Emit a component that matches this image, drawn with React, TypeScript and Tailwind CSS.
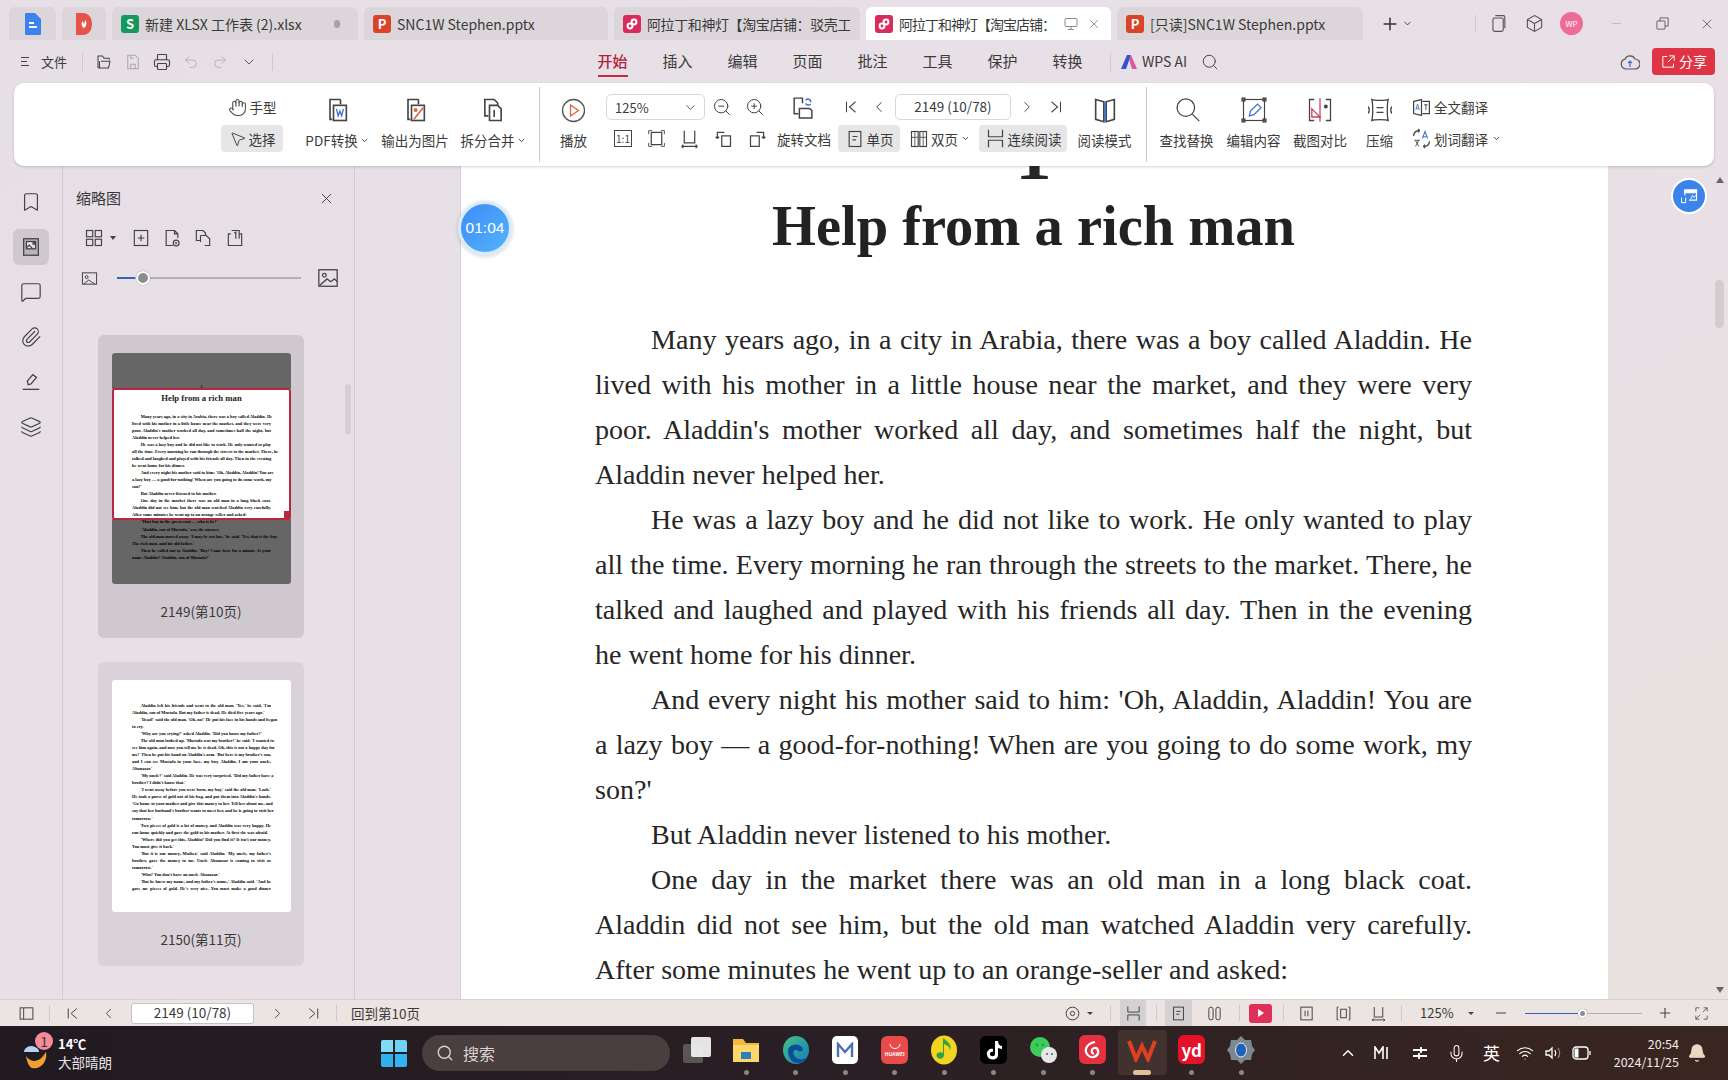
import { ReactNode } from "react";
import {
  Bell,
  Bookmark,
  ChevronDown,
  ChevronLeft,
  ChevronRight,
  ChevronUp,
  Hand,
  Layers,
  MessageSquare,
  Mic,
  MousePointer2,
  Paperclip,
  Plus,
  Minus,
  Printer,
  Redo2,
  Search,
  Undo2,
  Wifi,
  X,
  ZoomIn,
  ZoomOut,
} from "lucide-react";

const cjk = "font-['Noto_Sans_CJK_SC','Noto_Sans',sans-serif]";
const serif = "font-['Liberation_Serif','Times_New_Roman',serif]";

type Line = { t: string; first?: boolean; last?: boolean };

const pageOne: Line[] = [
  { t: "Many years ago, in a city in Arabia, there was a boy called Aladdin. He", first: true },
  { t: "lived with his mother in a little house near the market, and they were very" },
  { t: "poor. Aladdin's mother worked all day, and sometimes half the night, but" },
  { t: "Aladdin never helped her.", last: true },
  { t: "He was a lazy boy and he did not like to work. He only wanted to play", first: true },
  { t: "all the time. Every morning he ran through the streets to the market. There, he" },
  { t: "talked and laughed and played with his friends all day. Then in the evening" },
  { t: "he went home for his dinner.", last: true },
  { t: "And every night his mother said to him: 'Oh, Aladdin, Aladdin! You are", first: true },
  { t: "a lazy boy — a good-for-nothing! When are you going to do some work, my" },
  { t: "son?'", last: true },
  { t: "But Aladdin never listened to his mother.", first: true, last: true },
  { t: "One day in the market there was an old man in a long black coat.", first: true },
  { t: "Aladdin did not see him, but the old man watched Aladdin very carefully." },
  { t: "After some minutes he went up to an orange-seller and asked:", last: true },
];

const pageOneRest: Line[] = [
  { t: "'That boy in the green coat — who is he?'", first: true, last: true },
  { t: "'Aladdin, son of Mustafa,' was the answer.", first: true, last: true },
  { t: "The old man moved away. 'I may be too late,' he said. 'Yes, that is the boy.", first: true },
  { t: "The rich man, and his old father.'", last: true },
  { t: "Then he called out to Aladdin: 'Boy! Come here for a minute. Is your", first: true },
  { t: "name Aladdin? Aladdin, son of Mustafa?'", last: true },
];

const pageTwo: Line[] = [
  { t: "Aladdin left his friends and went to the old man. 'Yes,' he said, 'I'm", first: true },
  { t: "Aladdin, son of Mustafa. But my father is dead. He died five years ago.'", last: true },
  { t: "'Dead!' said the old man. 'Oh, no!' He put his face in his hands and began", first: true },
  { t: "to cry.", last: true },
  { t: "'Why are you crying?' asked Aladdin. 'Did you know my father?'", first: true, last: true },
  { t: "The old man looked up. 'Mustafa was my brother!' he said. 'I wanted to", first: true },
  { t: "see him again, and now you tell me he is dead. Oh, this is not a happy day for" },
  { t: "me!' Then he put his hand on Aladdin's arm. 'But here is my brother's son," },
  { t: "and I can see Mustafa in your face, my boy. Aladdin, I am your uncle," },
  { t: "Abanazar.'", last: true },
  { t: "'My uncle?' said Aladdin. He was very surprised. 'Did my father have a", first: true },
  { t: "brother? I didn't know that.'", last: true },
  { t: "'I went away before you were born, my boy,' said the old man. 'Look.'", first: true },
  { t: "He took a purse of gold out of his bag, and put them into Aladdin's hands." },
  { t: "'Go home to your mother and give this money to her. Tell her about me, and" },
  { t: "say that her husband's brother wants to meet her, and he is going to visit her" },
  { t: "tomorrow.'", last: true },
  { t: "Two pieces of gold is a lot of money, and Aladdin was very happy. He", first: true },
  { t: "ran home quickly and gave the gold to his mother. At first she was afraid.", last: true },
  { t: "'Where did you get this, Aladdin? Did you find it? It isn't our money.", first: true },
  { t: "You must give it back.'", last: true },
  { t: "'But it is our money, Mother,' said Aladdin. 'My uncle, my father's", first: true },
  { t: "brother, gave the money to me. Uncle Abanazar is coming to visit us" },
  { t: "tomorrow.'", last: true },
  { t: "'Who? You don't have an uncle Abanazar.'", first: true, last: true },
  { t: "'But he knew my name, and my father's name,' Aladdin said. 'And he", first: true },
  { t: "gave me pieces of gold. He's very nice. You must make a good dinner" },
];

function Svg({ size = 24, children, className = "" }: { size?: number; children: ReactNode; className?: string }) {
  return (
    <svg width={size} height={size} viewBox="0 0 24 24" fill="none" stroke="currentColor" strokeWidth="1.4" className={className}>
      {children}
    </svg>
  );
}

function Sep({ className = "h-[16px]" }: { className?: string }) {
  return <div className={`w-px shrink-0 bg-[#cfc9ce] ${className}`} />;
}

function Tab({ w, icon, label, active, labelClass = "", children }: { w: string; icon: ReactNode; label: string; active?: boolean; labelClass?: string; children?: ReactNode }) {
  return (
    <div className={`${w} flex h-[33px] shrink-0 items-center rounded-t-[6px] pl-[9px] pr-[10px] ${active ? "bg-white" : "bg-[#dcd6db]"}`}>
      {icon}
      <span className={`ml-[6px] min-w-0 flex-1 overflow-hidden whitespace-nowrap text-[14px] leading-[20px] text-[#3a3a3a] ${labelClass}`}>{label}</span>
      {children}
    </div>
  );
}

function FileIcon({ bg, letter }: { bg: string; letter: string }) {
  return (
    <div className={`${bg} flex h-[18px] w-[18px] shrink-0 items-center justify-center rounded-[3px] text-[13px] font-bold leading-none text-white`}>
      {letter}
    </div>
  );
}

function LinkIcon() {
  return (
    <div className="flex h-[18px] w-[18px] shrink-0 items-center justify-center rounded-[3px] bg-[#d92b5c]">
      <svg width="12" height="12" viewBox="0 0 12 12" fill="none" stroke="white" strokeWidth="2">
        <circle cx="8" cy="4" r="2.4" />
        <circle cx="4" cy="8" r="2.4" />
      </svg>
    </div>
  );
}

function MenuItem({ label, active }: { label: string; active?: boolean }) {
  return (
    <div className="relative flex h-full w-[65px] items-center justify-center">
      <span className={`text-[15px] ${active ? "font-medium text-[#b5213a]" : "text-[#3a3a3a]"}`}>{label}</span>
      {active && <div className="absolute bottom-[6px] h-[2px] w-[30px] bg-[#c8283f]" />}
    </div>
  );
}

function BigTool({ w, label, caret, children }: { w: string; label: string; caret?: boolean; children: ReactNode }) {
  return (
    <div className={`${w} flex shrink-0 flex-col items-center`}>
      <div className="flex h-[32px] items-center justify-center text-[#444]">{children}</div>
      <div className="flex h-[28px] items-center whitespace-nowrap text-[13.5px] leading-[18px] text-[#3a3a3a]">
        {label}
        {caret && <ChevronDown size={9} strokeWidth={2.5} className="ml-[2px]" />}
      </div>
    </div>
  );
}

function Box({ w, children }: { w: string; children: ReactNode }) {
  return <div className={`${w} flex h-full shrink-0 items-center justify-center text-[#444]`}>{children}</div>;
}

function Ribbon() {
  return (
    <div className="relative z-10 mx-[14px] flex h-[83px] w-[1700px] items-start rounded-[10px] bg-white pl-[207px] pt-[11px] text-[#3a3a3a] shadow-[0_1px_3px_rgba(0,0,0,0.18)]">
      <div className="flex w-[62px] shrink-0 flex-col items-center">
        <div className="flex h-[26px] items-center text-[13.5px] leading-[18px]">
          <Hand size={19} strokeWidth={1.3} className="mr-[3px] text-[#444]" />
          手型
        </div>
        <div className="mt-[5px] flex h-[27px] w-full items-center justify-center rounded-[4px] bg-[#e7e6e7] text-[13.5px] leading-[18px]">
          <MousePointer2 size={18} strokeWidth={1.3} className="mr-[2px] text-[#444]" />
          选择
        </div>
      </div>
      <div className="ml-[23px] flex">
        <BigTool w="w-[62px]" label="PDF转换" caret>
          <Svg size={28}>
            <path d="M15 3H6v17h2M15 3v4" />
            <rect x="9" y="8" width="11" height="13" />
            <path d="M11.5 11l1.5 6 1.5-4 1.5 4 1.5-6" stroke="#3f6fd1" strokeWidth="1.1" />
          </Svg>
        </BigTool>
        <BigTool w="ml-[13px] w-[68px]" label="输出为图片">
          <Svg size={28}>
            <path d="M15 3H6v17h2M15 3v4" />
            <rect x="9" y="8" width="11" height="13" />
            <path d="M11 20l8-10" stroke="#d8653d" />
            <circle cx="12.5" cy="12" r="1" stroke="#d8653d" />
          </Svg>
        </BigTool>
        <BigTool w="ml-[12px] w-[64px]" label="拆分合并" caret>
          <Svg size={28}>
            <path d="M8 17H5V3h8l3 3v2" />
            <path d="M9 8h7l3 3v10H9z" />
            <path d="M13 12v6" />
          </Svg>
        </BigTool>
      </div>
      <Sep className="ml-[14px] mt-[-7px] h-[75px]" />
      <div className="ml-[20px] flex w-[27px] shrink-0 flex-col items-center">
        <div className="flex h-[32px] items-center">
          <svg width="25" height="25" viewBox="0 0 25 25" fill="none">
            <circle cx="12.5" cy="12.5" r="11" stroke="#555" strokeWidth="1.3" />
            <path d="M9.5 7l8 5.5-8 5.5z" stroke="#d8653d" strokeWidth="1.3" />
          </svg>
        </div>
        <div className="flex h-[28px] items-center whitespace-nowrap text-[13.5px] leading-[18px]">播放</div>
      </div>
      <div className="ml-[19px] flex w-[464px] shrink-0 flex-col">
        <div className="flex h-[26px]">
          <div className="flex w-[99px] shrink-0 items-center justify-between rounded-[5px] border border-[#d8d8d8] pl-[8px] pr-[6px] text-[13px] leading-none">
            125%
            <ChevronDown size={15} strokeWidth={1.3} />
          </div>
          <Box w="w-[34px]"><ZoomOut size={20} strokeWidth={1.2} /></Box>
          <Box w="w-[32px]"><ZoomIn size={20} strokeWidth={1.2} /></Box>
          <Box w="w-[62px]">
            <Svg size={25}>
              <path d="M12 8V3H4v15h4" />
              <path d="M9 13h10l2 2v7H9z" />
              <path d="M15 5c2-2 5-1 5 2M20 9c-2 1-4 1-5-1" stroke="#3f6fd1" />
            </Svg>
          </Box>
          <Box w="w-[36px]">
            <Svg size={18}><path d="M6 5v14M18 5l-8 7 8 7" /></Svg>
          </Box>
          <Box w="w-[20px]"><ChevronLeft size={18} strokeWidth={1.3} /></Box>
          <div className="ml-[6px] flex w-[116px] shrink-0 items-center justify-center rounded-[5px] border border-[#d8d8d8] text-[13.5px] leading-none">2149 (10/78)</div>
          <Box w="w-[32px]"><ChevronRight size={18} strokeWidth={1.3} /></Box>
          <Box w="w-[26px]">
            <Svg size={18}><path d="M18 5v14M6 5l8 7-8 7" /></Svg>
          </Box>
        </div>
        <div className="mt-[5px] flex h-[27px] items-center">
          <Box w="w-[34px]">
            <div className="flex h-[17px] w-[18px] items-center justify-center border border-[#444] text-[10px] leading-none">1:1</div>
          </Box>
          <Box w="w-[33px]">
            <Svg size={21}>
              <path d="M6 5h12v14H6z" />
              <path d="M3 7V3h4M17 3h4v4M21 17v4h-4M7 21H3v-4" strokeWidth="1" />
            </Svg>
          </Box>
          <Box w="w-[33px]">
            <Svg size={21}><path d="M6 3v14h12V3M3 21h18M3 21l2-2M3 21l2 2M21 21l-2-2M21 21l-2 2" /></Svg>
          </Box>
          <Box w="w-[34px]">
            <Svg size={21}><rect x="10" y="9" width="10" height="12" /><path d="M5 12V5h8M5 12l-2-2M5 12l2-2" /></Svg>
          </Box>
          <Box w="w-[34px]">
            <Svg size={21}><rect x="4" y="9" width="10" height="12" /><path d="M19 12V5h-8M19 12l-2-2M19 12l2-2" /></Svg>
          </Box>
          <div className="flex w-[60px] shrink-0 justify-center whitespace-nowrap text-[13.5px] leading-[18px]">旋转文档</div>
          <div className="ml-[4px] flex h-full w-[62px] shrink-0 items-center justify-center rounded-[4px] bg-[#e7e6e7] text-[13.5px] leading-[18px]">
            <Svg size={20} className="mr-[2px] text-[#444]"><rect x="5" y="3" width="14" height="18" /><path d="M9 9h6M9 13h4" /></Svg>
            单页
          </div>
          <div className="flex h-full w-[79px] shrink-0 items-center justify-center text-[13.5px] leading-[18px]">
            <Svg size={20} className="mr-[2px] text-[#444]"><rect x="3" y="3" width="8" height="18" /><rect x="13" y="3" width="8" height="18" /><path d="M7 3v18M17 3v18M3 10h8M13 10h8" strokeWidth="1" /></Svg>
            双页
            <ChevronDown size={9} strokeWidth={2.5} className="ml-[3px]" />
          </div>
          <div className="flex h-full w-[88px] shrink-0 items-center justify-center rounded-[4px] bg-[#e7e6e7] text-[13.5px] leading-[18px]">
            <Svg size={21} className="mr-[2px] text-[#444]"><path d="M4 2v8h16V2M4 22v-8h16v8" /></Svg>
            连续阅读
          </div>
        </div>
      </div>
      <BigTool w="ml-[7px] w-[55px]" label="阅读模式">
        <Svg size={28}>
          <path d="M4 3l7 2v17l-7-2zM20 3l-7 2v17l7-2z" />
          <path d="M12 5v17" stroke="#3f6fd1" />
        </Svg>
      </BigTool>
      <Sep className="ml-[14px] mt-[-7px] h-[75px]" />
      <BigTool w="ml-[13px] w-[53px]" label="查找替换">
        <Svg size={28}><circle cx="11" cy="10" r="7.5" strokeWidth="1.1" /><path d="M16.5 15.5l6 6" strokeWidth="1.1" /></Svg>
      </BigTool>
      <BigTool w="ml-[14px] w-[53px]" label="编辑内容">
        <Svg size={28}>
          <rect x="3" y="3" width="18" height="18" strokeWidth="1" />
          <path d="M8 17l1-4 6-6 3 3-6 6z" stroke="#3f6fd1" strokeWidth="1.1" />
          <path d="M1.5 1.5h3v3h-3zM19.5 1.5h3v3h-3zM1.5 19.5h3v3h-3zM19.5 19.5h3v3h-3z" fill="#555" strokeWidth="0.5" />
        </Svg>
      </BigTool>
      <BigTool w="ml-[13px] w-[54px]" label="截图对比">
        <Svg size={28}>
          <path d="M7 3H3v18h4M17 3h4v18h-4" strokeWidth="1.1" />
          <path d="M12 2v20" stroke="#c8405c" strokeWidth="1.1" />
          <path d="M5 11l7 7H5z" stroke="#c8405c" strokeWidth="1.1" />
          <circle cx="17" cy="9" r="1" fill="#555" />
        </Svg>
      </BigTool>
      <BigTool w="ml-[19px] w-[27px]" label="压缩">
        <Svg size={28}>
          <path d="M5 3c2 1 12 1 14 0-1 4-1 14 0 18-2-1-12-1-14 0 1-4 1-14 0-18z" strokeWidth="1.1" />
          <path d="M9 10h6M9 14h6M2 9c1 2 1 4 0 6M22 9c-1 2-1 4 0 6" strokeWidth="1.1" />
        </Svg>
      </BigTool>
      <div className="ml-[18px] flex shrink-0 flex-col">
        <div className="flex h-[26px] items-center whitespace-nowrap text-[13.5px] leading-[18px]">
          <Svg size={21} className="mr-[2px] text-[#444]">
            <path d="M3 5l9-2v18l-9-2z" />
            <path d="M13 5h8v14h-8" />
            <path d="M5.5 15l2-7 2 7M6.5 13h2" stroke="#3f6fd1" strokeWidth="1" />
            <path d="M15 9h4M17 8v7" strokeWidth="1" />
          </Svg>
          全文翻译
        </div>
        <div className="mt-[5px] flex h-[27px] items-center whitespace-nowrap text-[13.5px] leading-[18px]">
          <Svg size={21} className="mr-[2px] text-[#444]">
            <path d="M3 9c0-4 3-6 7-6M10 3L8 1M10 3L8 5M21 15c0 4-3 6-7 6M14 21l2-2M14 21l2 2" />
            <path d="M13 12l3-8 3 8M14 10h4" stroke="#3f6fd1" strokeWidth="1.2" />
            <path d="M4 14h6M5 21l4-7M9 21l-4-7" strokeWidth="1" />
          </Svg>
          划词翻译
          <ChevronDown size={9} strokeWidth={2.5} className="ml-[4px]" />
        </div>
      </div>
    </div>
  );
}

function Rail() {
  const icons = [
    <Bookmark key="b" size={22} strokeWidth={1.3} />,
    <Svg key="t" size={22}><rect x="4" y="3" width="16" height="18" fill="#b9b4ba" /><rect x="7" y="6" width="10" height="8" fill="#e8e3e8" /><circle cx="15" cy="8" r="1" /><path d="M7 13l3-3 4 4" /></Svg>,
    <MessageSquare key="m" size={22} strokeWidth={1.3} />,
    <Paperclip key="p" size={22} strokeWidth={1.3} />,
    <Svg key="h" size={22}><path d="M9 15l-1-4 6-7 4 3-6 7z" /><path d="M3 20h18" /></Svg>,
    <Layers key="l" size={22} strokeWidth={1.3} />,
  ];
  return (
    <div className="flex w-[63px] shrink-0 flex-col items-center border-r border-[#d2ccd1] pt-[18px] text-[#444]">
      {icons.map((icon, i) => (
        <div key={i} className={`flex h-[36px] w-[36px] items-center justify-center rounded-[6px] ${i ? "mt-[9px]" : ""} ${i === 1 ? "bg-[#cfc9cf]" : ""}`}>
          {icon}
        </div>
      ))}
    </div>
  );
}

function ThumbLines({ lines }: { lines: Line[] }) {
  return (
    <div className={`${serif} text-[4.37px] font-bold leading-[7.03px] text-black`}>
      {lines.map((l, i) => (
        <div key={i} className={`whitespace-nowrap ${l.first ? "pl-[8.7px]" : ""} ${l.last ? "" : "text-justify [text-align-last:justify]"}`}>
          {l.t}
        </div>
      ))}
    </div>
  );
}

function ThumbPanel() {
  return (
    <div className="relative flex w-[292px] shrink-0 flex-col overflow-hidden border-r border-[#d2ccd1] text-[#444]">
      <div className="mt-[18px] flex h-[28px] items-center pl-[13px] pr-[19px]">
        <span className="flex-1 text-[15px] text-[#3a3a3a]">缩略图</span>
        <X size={17} strokeWidth={1.4} />
      </div>
      <div className="mt-[12px] flex h-[28px] items-center pl-[21px]">
        <Svg size={20}><rect x="3" y="3" width="7.5" height="7.5" /><rect x="13.5" y="3" width="7.5" height="7.5" /><rect x="3" y="13.5" width="7.5" height="7.5" /><rect x="13.5" y="13.5" width="7.5" height="7.5" /></Svg>
        <div className="ml-[6px] h-0 w-0 border-x-[3px] border-t-[4px] border-x-transparent border-t-[#444]" />
        <Svg size={20} className="ml-[15px]"><rect x="4" y="3" width="16" height="18" /><path d="M12 8v8M8 12h8" /></Svg>
        <Svg size={20} className="ml-[11px]"><path d="M15 3H5v18h8M15 3l4 4v5M15 3v4h4" /><circle cx="17" cy="18" r="3.5" /><path d="M15.7 16.7l2.6 2.6M18.3 16.7l-2.6 2.6" strokeWidth="1" /></Svg>
        <Svg size={20} className="ml-[11px]"><path d="M9 15H4V3h8l3 3v3" /><path d="M9 9h7l4 4v8h-6" /><path d="M9 9v8" /></Svg>
        <Svg size={20} className="ml-[12px]"><path d="M7 7H4v14h16V7h-3" /><path d="M8 3h9v10" /><path d="M11 6l2-1v8" /></Svg>
      </div>
      <div className="mt-[12px] flex h-[28px] items-center pl-[18px]">
        <Svg size={17}><rect x="2" y="4" width="20" height="16" /><circle cx="8" cy="10" r="2" /><path d="M4 20l7-6 4 3 5 3" /></Svg>
        <div className="relative ml-[19px] h-[2px] w-[184px] bg-[#b5b0b5]">
          <div className="h-full w-[18px] bg-[#3a63b8]" />
          <div className="absolute left-[19px] top-[-6px] h-[14px] w-[14px] rounded-full border-[2px] border-white bg-[#8d8d90] shadow-[0_0_1px_rgba(0,0,0,0.5)]" />
        </div>
        <Svg size={22} className="ml-[16px]"><rect x="2" y="3" width="20" height="18" /><circle cx="8" cy="9" r="2" /><path d="M3 20l8-7 4 3 4-3 3 3" /></Svg>
      </div>
      <div className="absolute left-[282px] top-[218px] h-[50px] w-[6px] rounded-full bg-[#d4cfd4]" />

      <div className="ml-[35px] mt-[43px] flex h-[303px] w-[206px] shrink-0 flex-col rounded-[6px] bg-[#cfc8cf]">
        <div className="relative mx-[14px] mt-[18px] h-[231px] w-[179px] overflow-hidden rounded-[3px] bg-white px-[20px]">
          <div className={`${serif} h-[40px] pt-[31px] text-center text-[5px] font-bold leading-none`}>1</div>
          <div className={`${serif} text-center text-[8.7px] font-bold leading-[11px] text-[#222]`}>Help from a rich man</div>
          <div className="mt-[9px]">
            <ThumbLines lines={[...pageOne, ...pageOneRest]} />
          </div>
          <div className="absolute inset-x-0 top-0 h-[36px] bg-black/60" />
          <div className="absolute inset-x-0 top-[166px] bottom-0 bg-black/60" />
          <div className="absolute inset-x-0 top-[35px] h-[132px] rounded-[3px] border-[2px] border-[#b6283f]" />
          <div className="absolute right-0 top-[158px] h-[7px] w-[7px] bg-[#b6283f]" />
        </div>
        <div className="flex flex-1 items-center justify-center text-[13.5px] text-[#3a3a3a]">2149(第10页)</div>
      </div>

      <div className="ml-[35px] mt-[24px] flex h-[304px] w-[206px] shrink-0 flex-col rounded-[6px] bg-[#d9d3d9]">
        <div className="mx-[14px] mt-[18px] h-[232px] w-[179px] overflow-hidden rounded-[3px] bg-white px-[20px] pt-[22px]">
          <ThumbLines lines={pageTwo} />
        </div>
        <div className="flex flex-1 items-center justify-center text-[13.5px] text-[#3a3a3a]">2150(第11页)</div>
      </div>
    </div>
  );
}

function DocPage() {
  return (
    <div className={`${serif} w-[1148px] shrink-0 overflow-hidden border-l border-[#d5d0d5] bg-white pl-[134px] pr-[136px] text-[#262626]`}>
      <div className="flex h-[14px] items-end justify-center overflow-hidden">
        <span className="text-[72px] font-bold leading-[72px] [margin-bottom:-11px]">1</span>
      </div>
      <h1 className="mt-[15px] h-[64px] whitespace-nowrap text-center text-[56.5px] font-bold leading-[62px] text-[#222]">Help from a rich man</h1>
      <div className="mt-[58px] text-[28.05px] leading-[45px]">
        {pageOne.map((l, i) => (
          <div key={i} className={`whitespace-nowrap ${l.first ? "pl-[56px]" : ""} ${l.last ? "" : "text-justify [text-align-last:justify]"}`}>
            {l.t}
          </div>
        ))}
      </div>
    </div>
  );
}

function BottomBar() {
  return (
    <div className="flex h-[27px] shrink-0 items-center justify-between border-t border-[#d5cfd0] bg-[#ebe4e3] text-[#444]">
      <div className="flex h-full items-center">
        <div className="ml-[3px] flex w-[46px] justify-center">
          <Svg size={17}><rect x="3" y="4" width="18" height="16" /><path d="M8 4v16" /></Svg>
        </div>
        <Sep />
        <div className="flex w-[44px] justify-center"><Svg size={17}><path d="M6 5v14M18 5l-8 7 8 7" /></Svg></div>
        <div className="flex w-[28px] justify-center"><ChevronLeft size={17} strokeWidth={1.3} /></div>
        <div className="ml-[9px] flex h-[21px] w-[123px] items-center justify-center rounded-[3px] border border-[#c5c0c3] bg-white text-[13.5px] leading-none text-[#3a3a3a]">2149 (10/78)</div>
        <div className="flex w-[46px] justify-center"><ChevronRight size={17} strokeWidth={1.3} /></div>
        <div className="flex w-[26px] justify-center"><Svg size={17}><path d="M18 5v14M6 5l8 7-8 7" /></Svg></div>
        <Sep className="ml-[10px] h-[16px]" />
        <span className="ml-[14px] text-[13.5px] text-[#3a3a3a]">回到第10页</span>
      </div>
      <div className="flex h-full items-center pr-[17px]">
        <div className="flex w-[24px] justify-center">
          <Svg size={17}><circle cx="12" cy="12" r="9" /><circle cx="12" cy="12" r="3" /></Svg>
        </div>
        <div className="flex w-[12px] justify-center"><div className="h-0 w-0 border-x-[3px] border-t-[3px] border-x-transparent border-t-[#444]" /></div>
        <Sep className="ml-[14px] h-[16px]" />
        <div className="ml-[9px] flex h-full w-[26px] items-center justify-center bg-[#d5d0d1]">
          <Svg size={17}><path d="M4 2v8h16V2M4 22v-8h16v8" /></Svg>
        </div>
        <Sep className="ml-[10px] h-[16px]" />
        <div className="ml-[8px] flex h-full w-[27px] items-center justify-center bg-[#d5d0d1]">
          <Svg size={17}><rect x="5" y="3" width="14" height="18" /><path d="M9 9h6M9 13h4" /></Svg>
        </div>
        <div className="flex w-[44px] justify-center">
          <Svg size={17}><rect x="4" y="3" width="6" height="18" rx="3" /><rect x="14" y="3" width="6" height="18" rx="3" /></Svg>
        </div>
        <Sep className="ml-[3px] h-[16px]" />
        <div className="ml-[9px] flex h-[19px] w-[23px] items-center justify-center rounded-[3px] bg-[#de3059]">
          <div className="h-0 w-0 border-y-[4px] border-l-[6px] border-y-transparent border-l-white" />
        </div>
        <Sep className="ml-[11px] h-[16px]" />
        <div className="flex w-[44px] justify-center"><Svg size={17}><rect x="4" y="3" width="16" height="18" /><path d="M10 8v8M14 8v8" /></Svg></div>
        <div className="flex w-[30px] justify-center">
          <Svg size={17}><rect x="8" y="6" width="8" height="12" /><path d="M5 3H3v18h2M19 3h2v18h-2" /></Svg>
        </div>
        <div className="flex w-[40px] justify-center">
          <Svg size={17}><path d="M6 3v14h12V3M3 21h18M3 21l2-2M3 21l2 2M21 21l-2-2M21 21l-2 2" /></Svg>
        </div>
        <Sep className="ml-[3px] h-[16px]" />
        <span className="ml-[18px] w-[34px] text-[13px] text-[#3a3a3a]">125%</span>
        <div className="ml-[11px] flex w-[12px] justify-center"><div className="h-0 w-0 border-x-[3px] border-t-[3px] border-x-transparent border-t-[#444]" /></div>
        <div className="ml-[14px] flex w-[20px] justify-center"><Minus size={16} strokeWidth={1.6} /></div>
        <div className="relative ml-[14px] h-px w-[117px] bg-[#b5b0b5]">
          <div className="h-full w-[58px] bg-[#3a63b8]" />
          <div className="absolute left-[53px] top-[-4px] h-[9px] w-[9px] rounded-full border-[2px] border-white bg-[#8d8d90] shadow-[0_0_1px_rgba(0,0,0,0.5)]" />
        </div>
        <div className="ml-[13px] flex w-[20px] justify-center"><Plus size={16} strokeWidth={1.6} /></div>
        <div className="ml-[16px] flex w-[20px] justify-center">
          <Svg size={17}><path d="M4 9V4h5M15 4h5v5M20 15v5h-5M9 20H4v-5M14 10l6-6M10 14l-6 6" strokeWidth="1.1" /></Svg>
        </div>
      </div>
    </div>
  );
}

function AppSlot({ children, dot = true, active }: { children: ReactNode; dot?: boolean; active?: boolean }) {
  return (
    <div className={`relative flex h-[45px] w-[49.5px] shrink-0 items-center justify-center rounded-[4px] pb-[6px] ${active ? "bg-[#42322f]" : ""}`}>
      {children}
      {dot && !active && <div className="absolute bottom-0 h-[5px] w-[5px] rounded-full bg-[#8b8583]" />}
      {active && <div className="absolute bottom-0 h-[5px] w-[18px] rounded-full bg-[#e3bd9d]" />}
    </div>
  );
}

function TaskApps() {
  return (
    <div className="ml-[2px] flex h-full items-end pb-[5px]">
      <AppSlot dot={false}>
        <div className="relative h-[26px] w-[28px]">
          <div className="absolute left-0 top-[7px] h-[19px] w-[20px] rounded-[2px] bg-[#5a5654]" />
          <div className="absolute right-0 top-0 h-[20px] w-[20px] rounded-[2px] bg-[#efefef] opacity-95" />
        </div>
      </AppSlot>
      <AppSlot>
        <svg width="28" height="28" viewBox="0 0 28 28">
          <path d="M1 3h10l3 4h13v19H1z" fill="#f2b93b" />
          <path d="M1 9h26v17H1z" fill="#fbd869" />
          <rect x="9" y="16" width="10" height="7" fill="#2f7fc0" />
        </svg>
      </AppSlot>
      <AppSlot>
        <svg width="28" height="30" viewBox="0 0 28 30">
          <defs>
            <linearGradient id="edgeA" x1="0" y1="0" x2="1" y2="1">
              <stop offset="0" stopColor="#42c67d" />
              <stop offset="1" stopColor="#1878c8" />
            </linearGradient>
          </defs>
          <ellipse cx="14" cy="15" rx="13" ry="14" fill="url(#edgeA)" />
          <path d="M6 15c1-6 12-8 15-1 0 3-5 3-6 1-6-1-4 8 2 9 3 1 6 0 8-2-3 6-12 8-16 3-2-3-3-6-3-10z" fill="#0c4f96" />
        </svg>
      </AppSlot>
      <AppSlot>
        <div className="flex h-[28px] w-[26px] items-center justify-center rounded-[5px] bg-white">
          <svg width="18" height="16" viewBox="0 0 18 16" fill="none" stroke="#4d6fb5" strokeWidth="2.4">
            <path d="M2 15V2l7 8 7-8v13" />
          </svg>
        </div>
      </AppSlot>
      <AppSlot>
        <div className="flex h-[28px] w-[27px] flex-col items-center justify-center rounded-[6px] bg-[#e94b4b]">
          <svg width="14" height="6" viewBox="0 0 14 6" fill="none" stroke="white" strokeWidth="1"><path d="M2 0c0 6 10 6 10 0" /></svg>
          <span className="mt-[1px] text-[5px] font-bold leading-none text-white">HUAWEI</span>
        </div>
      </AppSlot>
      <AppSlot>
        <svg width="28" height="30" viewBox="0 0 28 30">
          <ellipse cx="14" cy="15" rx="13" ry="14.5" fill="#f3d41f" />
          <path d="M13 3v15c-4-2-8 1-6 4s7 2 7-2V9c3 1 6 3 6 6 2-4-1-8-7-12z" fill="#2fa04e" />
        </svg>
      </AppSlot>
      <AppSlot>
        <div className="flex h-[28px] w-[27px] items-center justify-center rounded-[6px] bg-black">
          <svg width="18" height="20" viewBox="0 0 18 20">
            <path d="M10 1h3c0 3 2 5 4 5v3c-2 0-3-1-4-1v7c0 6-10 6-11 0-1-4 3-7 6-6v3c-2-1-3 1-3 2 0 3 5 3 5 0z" fill="white" />
          </svg>
        </div>
      </AppSlot>
      <AppSlot>
        <svg width="30" height="30" viewBox="0 0 30 30">
          <ellipse cx="12" cy="12" rx="10" ry="10" fill="#3ecb5c" />
          <ellipse cx="21" cy="20" rx="8" ry="8" fill="#e8e8e8" />
          <circle cx="9" cy="10" r="1.4" fill="#1a3" />
          <circle cx="15" cy="10" r="1.4" fill="#1a3" />
          <circle cx="19" cy="19" r="1" fill="#555" />
          <circle cx="24" cy="19" r="1" fill="#555" />
        </svg>
      </AppSlot>
      <AppSlot>
        <div className="flex h-[29px] w-[27px] items-center justify-center rounded-[6px] bg-[#e5313f]">
          <svg width="19" height="20" viewBox="0 0 19 20" fill="none" stroke="white" strokeWidth="2.2">
            <path d="M12 2c-7 1-10 6-9 10s6 7 10 4 2-9-2-8c-3 1-3 5 0 6" />
          </svg>
        </div>
      </AppSlot>
      <AppSlot active>
        <svg width="30" height="24" viewBox="0 0 30 24" fill="none" stroke="#e23f22" strokeWidth="4">
          <path d="M2 3l7 18 6-13 6 13 7-18" />
        </svg>
      </AppSlot>
      <AppSlot>
        <div className="flex h-[29px] w-[27px] items-center justify-center rounded-[6px] bg-[#e3112a] text-[17px] font-bold leading-none text-white">yd</div>
      </AppSlot>
      <AppSlot>
        <svg width="28" height="30" viewBox="0 0 28 30">
          <path d="M14 1l4 4 6 0 1 6 3 4-3 4-1 6-6 0-4 4-4-4-6 0-1-6-3-4 3-4 1-6 6 0z" fill="#7d8790" />
          <ellipse cx="14" cy="15" rx="5.5" ry="7" fill="#1d64b8" stroke="#e7ecf0" strokeWidth="1" />
        </svg>
      </AppSlot>
    </div>
  );
}

function Taskbar() {
  return (
    <div className="flex h-[54px] shrink-0 items-center bg-gradient-to-r from-[#211a21] via-[#2a1f24] to-[#3a2620] text-white">
      <div className="relative ml-[24px] h-[36px] w-[30px] shrink-0">
        <svg width="28" height="32" viewBox="0 0 28 32" className="absolute left-0 top-[5px]">
          <path d="M2 16c6 8 14 6 20-4 2 10-6 18-14 16-3-1-5-6-6-12z" fill="#f0a030" />
          <path d="M0 12c0-4 6-8 11-5 3 1 4 3 4 5z" fill="#b8d2f5" />
        </svg>
        <div className="absolute left-[11px] top-[-3px] flex h-[18px] w-[18px] items-center justify-center rounded-full bg-[#f48a9c] text-[13px] leading-none text-[#333]">1</div>
      </div>
      <div className="ml-[4px] flex w-[60px] shrink-0 flex-col text-[13px] leading-[18px]">
        <span className="font-bold">14℃</span>
        <span className="whitespace-nowrap text-[13.5px] text-[#e8e4e4]">大部晴朗</span>
      </div>
      <div className="ml-[263px] grid h-[27px] w-[26px] shrink-0 grid-cols-2 gap-[2px]">
        <div className="rounded-tl-[2px] bg-[#7fdcf6]" />
        <div className="rounded-tr-[2px] bg-[#6fd2f5]" />
        <div className="rounded-bl-[2px] bg-[#2eb2ee]" />
        <div className="rounded-br-[2px] bg-[#31b4ef]" />
      </div>
      <div className="ml-[15px] flex h-[36px] w-[248px] shrink-0 items-center rounded-full bg-[#4a3e3f] pl-[14px] text-[16px] text-[#d8d4d4]">
        <Search size={18} strokeWidth={1.8} />
        <span className="ml-[9px]">搜索</span>
      </div>
      <TaskApps />
      <div className="ml-[67px] flex h-full items-center">
        <div className="flex w-[30px] justify-center"><ChevronUp size={18} strokeWidth={2} /></div>
        <div className="flex w-[38px] justify-center">
          <svg width="16" height="14" viewBox="0 0 16 14" fill="none" stroke="white" strokeWidth="1.6"><path d="M1 13V1l4 6 4-6v12M13 1v12" /></svg>
        </div>
        <div className="flex w-[38px] justify-center">
          <svg width="16" height="16" viewBox="0 0 16 16" fill="none" stroke="white" strokeWidth="1.8"><path d="M1 5h14M9 2v6M1 11h14M7 8v6" /></svg>
        </div>
        <div className="flex w-[35px] justify-center"><Mic size={19} strokeWidth={1.3} /></div>
        <div className="flex w-[35px] justify-center text-[17px]">英</div>
        <div className="flex w-[32px] justify-center"><Wifi size={18} strokeWidth={1.6} /></div>
        <div className="flex w-[24px] justify-center">
          <svg width="18" height="16" viewBox="0 0 18 16" fill="none" stroke="white" strokeWidth="1.3">
            <path d="M2 6v4h3l3 3V3L5 6zM11 5c1 2 1 4 0 6" />
            <path d="M14 3c2 3 2 7 0 10" stroke="#8a807c" />
          </svg>
        </div>
        <div className="flex w-[32px] justify-center">
          <svg width="19" height="14" viewBox="0 0 19 14" fill="none" stroke="white" strokeWidth="1.3">
            <rect x="1" y="1" width="15" height="12" rx="3" />
            <rect x="2.5" y="2.5" width="4" height="9" fill="white" stroke="none" />
            <path d="M18 5v4" />
          </svg>
        </div>
        <div className="flex w-[82px] flex-col items-end text-[12.5px] leading-[18px] text-[#f0ecec]">
          <span>20:54</span>
          <span>2024/11/25</span>
        </div>
        <Bell size={20} strokeWidth={1.3} fill="#e8d9c4" className="ml-[8px] text-[#e8d9c4]" />
      </div>
    </div>
  );
}

export default function App() {
  return (
    <div className={`${cjk} flex h-[1080px] w-[1728px] flex-col overflow-hidden bg-gradient-to-br from-[#e6e0e6] via-[#e8e0e6] to-[#e9e2e0]`}>
      <div className="flex h-[40px] shrink-0 items-end gap-[6px] pl-[9px]">
        <div className="flex h-[33px] w-[47px] shrink-0 items-center justify-center rounded-t-[6px] bg-[#dcd6db]">
          <svg width="18" height="24" viewBox="0 0 18 24">
            <path d="M2 1h9l6 6v15a1 1 0 0 1-1 1H2a1 1 0 0 1-1-1V2a1 1 0 0 1 1-1z" fill="#3b82ee" />
            <path d="M5 11h5M5 15h8" stroke="white" strokeWidth="2" />
          </svg>
        </div>
        <div className="flex h-[33px] w-[44px] shrink-0 items-center justify-center rounded-t-[6px] bg-[#dcd6db]">
          <svg width="18" height="24" viewBox="0 0 18 24">
            <path d="M1 1h7c12 0 12 22 0 22H1z" fill="#e5534b" />
            <path d="M9 16c-3-2-3-5-1-7 0 2 1 3 1 3s1-2 1-4c2 2 2 6-1 8z" fill="white" />
          </svg>
        </div>
        <Tab w="w-[246px]" icon={<FileIcon bg="bg-[#16995f]" letter="S" />} label="新建 XLSX 工作表 (2).xlsx">
          <div className="ml-[8px] mr-[8px] h-[8px] w-[6px] rounded-full bg-[#a8a3a8]" />
        </Tab>
        <Tab w="w-[244px]" icon={<FileIcon bg="bg-[#d9432a]" letter="P" />} label="SNC1W Stephen.pptx" />
        <Tab w="w-[246px]" icon={<LinkIcon />} label="阿拉丁和神灯【淘宝店铺：驳壳工" labelClass="tracking-[-0.4px]" />
        <Tab w="w-[245px]" active icon={<LinkIcon />} label="阿拉丁和神灯【淘宝店铺：" labelClass="tracking-[-1px]">
          <svg width="14" height="14" viewBox="0 0 14 14" fill="none" stroke="#8a8a8a" strokeWidth="1" className="ml-[4px]">
            <rect x="1" y="1.5" width="12" height="8" rx="1" />
            <path d="M4 12.5h6M7 10v2" />
          </svg>
          <X size={14} strokeWidth={1.2} className="ml-[9px] text-[#666]" />
        </Tab>
        <Tab w="w-[246px]" icon={<FileIcon bg="bg-[#d9432a]" letter="P" />} label="[只读]SNC1W Stephen.pptx" />
        <div className="relative h-[33px] flex-1">
          <div className="flex h-full items-center pl-[11px] text-[#333]">
            <Plus size={20} strokeWidth={1.8} />
            <ChevronDown size={11} strokeWidth={2} className="ml-[2px]" />
            <Sep className="ml-[62px] h-[18px]" />
            <Svg size={19} className="ml-[13px] text-[#555]"><rect x="5" y="5" width="13" height="17" rx="2" /><path d="M8 2h10a2 2 0 0 1 2 2v14" /></Svg>
            <Svg size={19} className="ml-[17px] text-[#555]"><path d="M12 2l9 5v10l-9 5-9-5V7zM12 12l9-5M12 12L3 7M12 12v10" /></Svg>
            <div className="ml-[16px] flex h-[23px] w-[23px] items-center justify-center rounded-full bg-[#ee6c95] text-[8px] text-white">WP</div>
            <Minus size={13} strokeWidth={1} className="ml-[27px] text-[#999]" />
            <Svg size={15} className="ml-[32px] text-[#555]"><rect x="3" y="8" width="13" height="13" rx="1" /><path d="M8 8V3h13v13h-5" /></Svg>
            <X size={16} strokeWidth={1.2} className="ml-[29px] text-[#555]" />
          </div>
        </div>
      </div>

      <div className="flex h-[43px] shrink-0 items-center text-[#444]">
        <div className="ml-[21px] flex w-[12px] flex-col gap-[3px]">
          <div className="h-px w-[8px] bg-[#444]" />
          <div className="h-px w-[6px] bg-[#444]" />
          <div className="h-px w-[8px] bg-[#444]" />
        </div>
        <span className="ml-[8px] text-[13px] text-[#3a3a3a]">文件</span>
        <Sep className="ml-[15px] h-[18px]" />
        <Svg size={18} className="ml-[12px]"><path d="M4 20V4h6l2 3h7v2M4 20h14l2-9H8M6 11v9" /></Svg>
        <Svg size={18} className="ml-[11px] text-[#aaa]"><path d="M5 3h10l4 4v14H5zM9 21v-6h6v6M9 3v4h4" /></Svg>
        <Printer size={18} strokeWidth={1.5} className="ml-[11px]" />
        <Undo2 size={16} strokeWidth={1.2} className="ml-[12px] text-[#aaa]" />
        <Redo2 size={16} strokeWidth={1.2} className="ml-[13px] text-[#aaa]" />
        <ChevronDown size={16} strokeWidth={1.3} className="ml-[13px]" />
        <Sep className="ml-[15px] h-[18px]" />
        <div className="ml-[307px] flex h-full">
          {["开始", "插入", "编辑", "页面", "批注", "工具", "保护", "转换"].map((m, i) => (
            <MenuItem key={m} label={m} active={i === 0} />
          ))}
        </div>
        <Sep className="ml-[10px] h-[18px]" />
        <svg width="18" height="16" viewBox="0 0 18 16" className="ml-[9px]">
          <path d="M7 1h4L6 15H1z" fill="#3450d8" />
          <path d="M9 5l2-4 6 14h-5z" fill="#d85a9e" />
        </svg>
        <span className="ml-[4px] text-[14px] text-[#3a3a3a]">WPS AI</span>
        <Search size={18} strokeWidth={1.3} className="ml-[14px]" />
        <div className="ml-auto flex items-center pr-[13px]">
          <svg width="20" height="18" viewBox="0 0 20 18" fill="none" stroke="#555" strokeWidth="1.2">
            <path d="M6 16a5 5 0 0 1-1-9.8A5.5 5.5 0 0 1 15 6a5 5 0 0 1 0 10z" />
            <path d="M10 14V8M8 10l2-2 2 2" stroke="#3f6fd1" />
          </svg>
          <div className="ml-[12px] flex h-[27px] w-[63px] items-center justify-center rounded-[4px] bg-[#df3445] text-[14px] text-white">
            <Svg size={17} className="mr-[2px]"><path d="M13 4h7v7M20 4L11 13M10 5H4v15h15v-5" /></Svg>
            分享
          </div>
        </div>
      </div>

      <Ribbon />

      <div className="relative flex min-h-0 flex-1 overflow-hidden">
        <Rail />
        <ThumbPanel />
        <div className="w-[105px] shrink-0" />
        <DocPage />
        <div className="flex-1" />
        <div className="absolute left-[458px] top-[35px] flex h-[54px] w-[54px] items-center justify-center rounded-full border-[3px] border-[#dceaf8] bg-gradient-to-br from-[#3f8bf5] to-[#52b4fb] text-[15.5px] text-white shadow-[0_1px_4px_rgba(90,130,180,0.4)] [font-family:'Liberation_Sans',sans-serif]">
          01:04
        </div>
        <div className="absolute left-[1671px] top-[12px] flex h-[36px] w-[36px] items-center justify-center rounded-full border-[2px] border-white bg-[#3d84ea] text-white">
          <Svg size={20}><path d="M7 11V5h14v12H12" /><path d="M7 5h14v3H7z" fill="white" /><path d="M14 16l2-5 2 3 2-3" strokeWidth="1" /><path d="M3 14v6h5v-6" strokeWidth="1.2" /></Svg>
        </div>
        <div className="absolute left-[1716px] top-[11px] h-0 w-0 border-x-[4px] border-b-[6px] border-x-transparent border-b-[#666]" />
        <div className="absolute left-[1715px] top-[114px] h-[48px] w-[9px] rounded-full bg-[#d3cdcf]" />
        <div className="absolute bottom-[6px] left-[1716px] h-0 w-0 border-x-[4px] border-t-[6px] border-x-transparent border-t-[#666]" />
      </div>

      <BottomBar />
      <Taskbar />
    </div>
  );
}
